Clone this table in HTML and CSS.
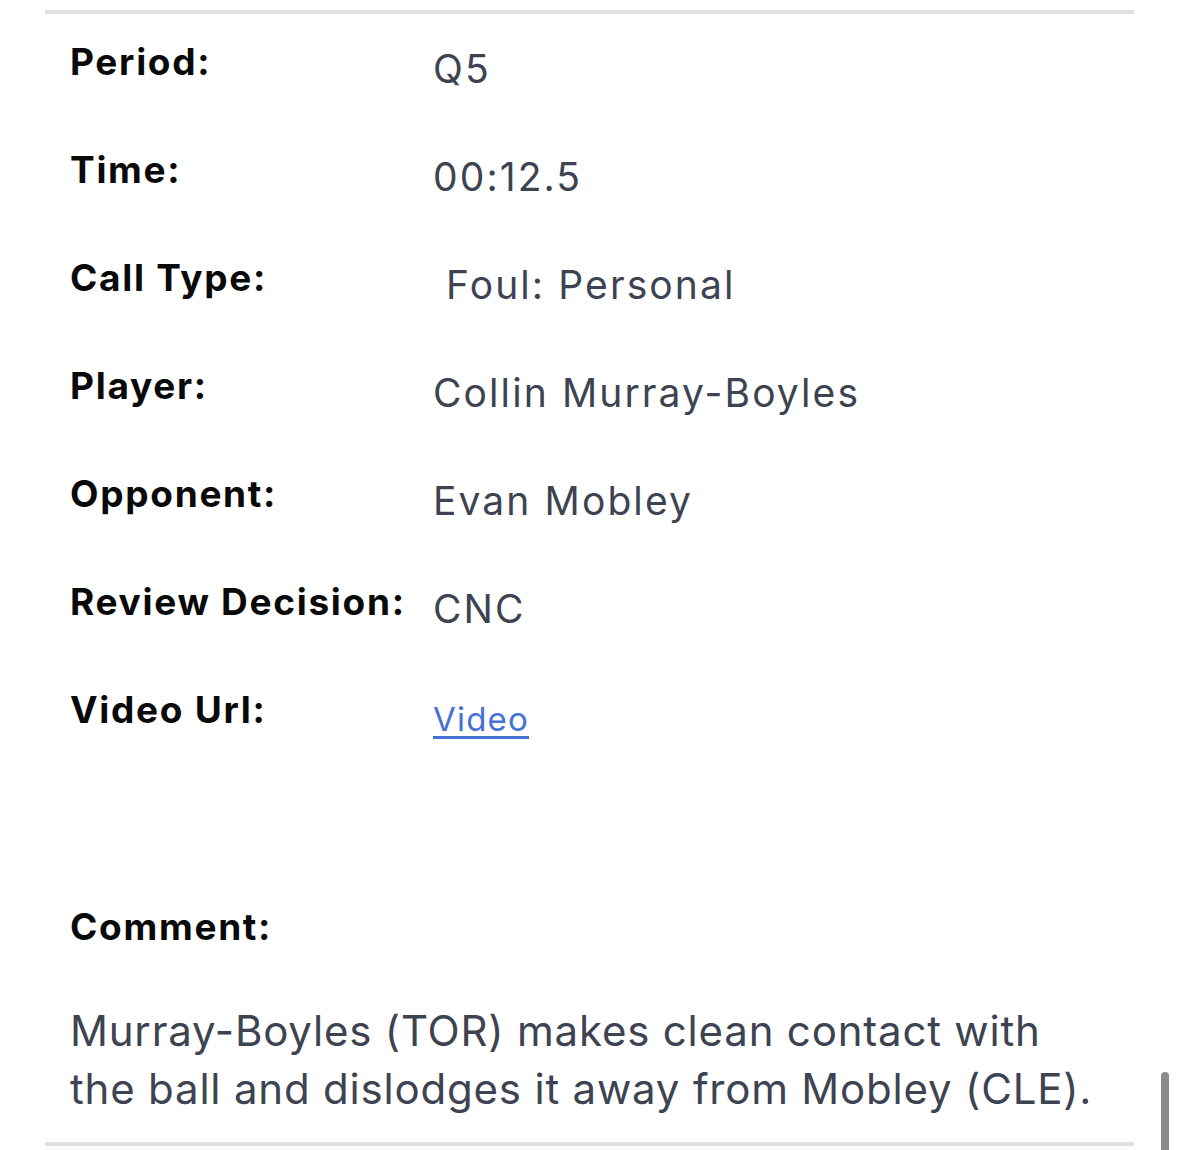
FILE: index.html
```html
<!DOCTYPE html>
<html lang="en">
<head>
<meta charset="utf-8">
<title>Call Details</title>
<link rel="stylesheet" href="styles.css">
</head>
<body>
<div class="card">
  <div class="rows">
    <div class="row"><div class="label">Period:</div><div class="value">Q5</div></div>
    <div class="row"><div class="label">Time:</div><div class="value">00:12.5</div></div>
    <div class="row"><div class="label">Call Type:</div><div class="value">&nbsp;Foul: Personal</div></div>
    <div class="row"><div class="label">Player:</div><div class="value">Collin Murray-Boyles</div></div>
    <div class="row"><div class="label">Opponent:</div><div class="value">Evan Mobley</div></div>
    <div class="row"><div class="label">Review Decision:</div><div class="value">CNC</div></div>
    <div class="row"><div class="label">Video Url:</div><div class="value"><a class="link" href="#">Video</a></div></div>
  </div>
  <div class="comment">
    <div class="label">Comment:</div>
    <p class="comment-text">Murray-Boyles (TOR) makes clean contact with the ball and dislodges it away from Mobley (CLE).</p>
  </div>
</div>
<div class="scrollbar"></div>
</body>
</html>
```
FILE: styles.css
```css
html, body {
  margin: 0;
  padding: 0;
  background: #ffffff;
}
body {
  font-family: "Inter", "Liberation Sans", sans-serif;
  width: 1179px;
  height: 1150px;
  overflow: hidden;
}
.card {
  margin: 10px 45px 0 45px;
  border-top: 4px solid #e0e0e0;
  border-bottom: 4px solid #e0e0e0;
  padding: 23px 24px 24px 25px;
}
.row {
  display: grid;
  grid-template-columns: 363px 1fr;
  align-items: start;
  height: 108px;
}
.label {
  font-size: 37px;
  line-height: 50px;
  font-weight: 700;
  letter-spacing: 1.7px;
  color: #0a0a0a;
}
.value {
  font-size: 39px;
  line-height: 64px;
  font-weight: 400;
  letter-spacing: 2.1px;
  color: #3d4351;
}
.link {
  font-size: 33px;
  letter-spacing: 1.2px;
  color: #4472d4;
  text-decoration: underline;
  text-decoration-thickness: 3px;
  text-underline-offset: 5px;
}
.comment {
  padding-top: 109px;
}
.comment-text {
  margin: 50px 0 0 0;
  max-width: 1040px;
  font-size: 42px;
  line-height: 58px;
  letter-spacing: 0.8px;
  color: #3d4351;
}
.scrollbar {
  position: absolute;
  left: 1161px;
  top: 1072px;
  width: 8px;
  height: 90px;
  border-radius: 4px;
  background: #8a8a8a;
}
```
